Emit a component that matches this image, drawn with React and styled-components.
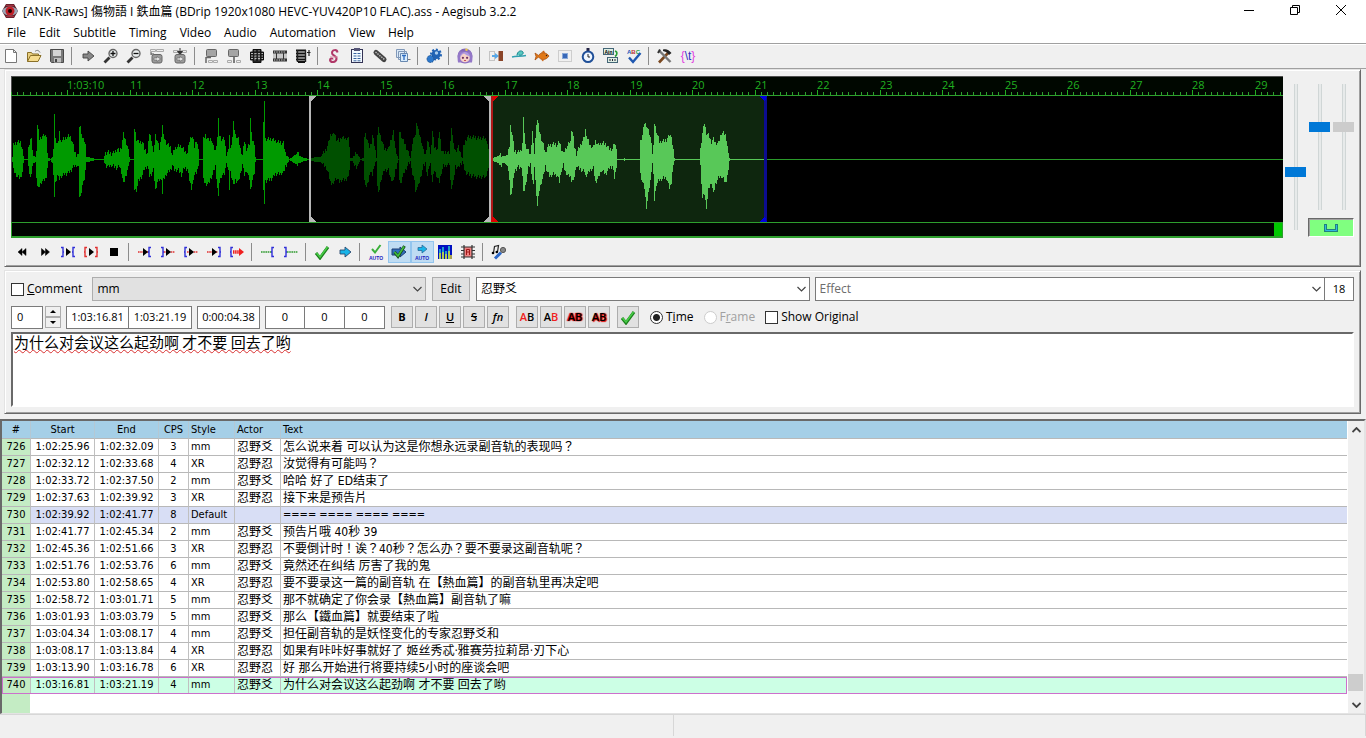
import React, { useState } from "react";
import styled, { createGlobalStyle, css } from "styled-components";

const GlobalStyle = createGlobalStyle`
  * {
    box-sizing: border-box;
  }
  body {
    margin: 0;
    background: #f0f0f0;
    color: #000;
    font-family: "Open Sans", "Noto Sans CJK SC", sans-serif;
    font-size: 12px;
    line-height: 16px;
  }
  button, input, select, textarea {
    margin: 0;
    padding: 0;
    font: inherit;
    color: inherit;
    border-radius: 0;
    outline: none;
  }
`;

/* ---------- window ---------- */

const Window = styled.div`
  display: flex;
  flex-direction: column;
  min-height: 100vh;
  overflow: hidden;
`;

const TitleBar = styled.header`
  display: flex;
  align-items: flex-start;
  height: 24px;
  padding: 0 2px;
  background: #fff;
`;

const TitleIcon = styled.svg`
  width: 16px;
  height: 16px;
  margin-top: 3px;
`;

const Title = styled.h1`
  flex: 1;
  margin: 0;
  padding: 4px 0 0 5px;
  font-family: "Open Sans", "Noto Sans CJK JP", sans-serif;
  font-size: 12px;
  font-weight: 400;
  line-height: 16px;
  white-space: nowrap;
`;

const WindowButton = styled.button`
  width: 46px;
  height: 22px;
  border: 0;
  background: none;
`;

const MenuBar = styled.nav`
  display: flex;
  height: 19px;
  padding-left: 7px;
  gap: 13px;
  background: #fff;
`;

const MenuLink = styled.a`
  color: #000;
  text-decoration: none;
  line-height: 18px;
`;

/* ---------- toolbars ---------- */

const ToolBar = styled.div`
  display: flex;
  align-items: center;
  height: 26px;
  border-top: 1px solid #a0a0a0;
  border-bottom: 1px solid #a0a0a0;
  box-shadow: inset 0 1px 0 #fff;
`;

const ToolButton = styled.button`
  display: flex;
  align-items: center;
  justify-content: center;
  width: 23px;
  height: 22px;
  padding-right: 1px;
  border: 1px solid transparent;
  background: none;
  ${(props) =>
    props.$on &&
    css`
      border-color: #93c5ee;
      background: #bfdcf3;
    `}
`;

const Separator = styled.span`
  width: 1px;
  height: 18px;
  margin: 0 5px 0 2px;
  background: #8c8c8c;
`;

/* ---------- panels ---------- */

const Panel = styled.section`
  margin: ${(props) => props.$margin};
  padding: ${(props) => props.$padding};
  border: 1px solid;
  border-color: #e3e3e3 #696969 #696969 #e3e3e3;
  box-shadow: inset 1px 1px 0 #fff, inset -1px -1px 0 #a0a0a0;
`;

const AudioRow = styled.div`
  display: flex;
  gap: 2px;
`;

const AudioDisplay = styled.div`
  display: flex;
  flex-direction: column;
  flex: 1;
  min-width: 0;
  height: 162px;
  background: #000;
`;

const Wave = styled.svg`
  display: block;
  width: 100%;
  height: 146px;
  font-family: "Open Sans", sans-serif;
  font-size: 11px;
`;

const AudioScroll = styled.div`
  display: flex;
  justify-content: flex-end;
  height: 16px;
  border: 1px solid #2da02d;
  border-bottom-width: 2px;
  background: #000500;
`;

const AudioThumb = styled.div`
  width: 8px;
  background: #00c800;
`;

const Sliders = styled.div`
  display: flex;
  gap: 2px;
  padding-top: 8px;
`;

const SliderColumn = styled.div`
  display: flex;
  flex-direction: column;
  gap: 8px;
`;

const SliderPair = styled.div`
  display: flex;
  gap: 3px;
  padding-left: 1px;
`;

const Slider = styled.input`
  appearance: none;
  writing-mode: vertical-lr;
  width: 21px;
  height: ${(props) => props.$length}px;
  background: none;

  &::-webkit-slider-runnable-track {
    width: 21px;
    background: linear-gradient(
      90deg,
      transparent 9px,
      #d0d6d6 9px 10px,
      #e7eaea 10px 12px,
      #d0d6d6 12px 13px,
      transparent 13px
    );
  }
  &::-webkit-slider-thumb {
    appearance: none;
    width: 21px;
    height: 10px;
    background: #0078d7;
  }
  &:disabled::-webkit-slider-thumb {
    background: #cccccc;
  }
`;

const LinkButton = styled.button`
  display: flex;
  align-items: center;
  justify-content: center;
  height: 19px;
  border: 1px solid;
  border-color: #696969 #fff #fff #696969;
  box-shadow: inset 1px 1px 0 #a0a0a0;
  background: #80ff80;
`;

const AudioTools = styled.div`
  display: flex;
  align-items: center;
  height: 28px;
`;

/* ---------- edit box ---------- */

const FormRow = styled.div`
  display: flex;
  align-items: center;
  height: 24px;
  margin-bottom: ${(props) => props.$gap}px;
`;

const CheckLabel = styled.label`
  display: flex;
  align-items: center;
  gap: 3px;
  margin-right: 10px;
  white-space: nowrap;
  color: ${(props) => (props.$dim ? "#a0a0a0" : "#000")};
`;

const CheckBox = styled.input`
  appearance: none;
  width: 13px;
  height: 13px;
  border: 1px solid #333;
  background: #fff;
  &:checked {
    background: #333;
  }
`;

const Radio = styled.input`
  appearance: none;
  width: 13px;
  height: 13px;
  border: 1px solid #333;
  border-radius: 50%;
  background: #fff;
  &:checked {
    background: radial-gradient(circle, #222 0 3px, #fff 4px);
  }
  &:disabled {
    border-color: #ccc;
  }
`;

const SelectBox = styled.div`
  display: grid;
  flex: ${(props) => props.$flex};
  min-width: 0;
  height: 24px;
  margin-right: ${(props) => props.$gap}px;
  align-items: center;

  > * {
    grid-area: 1 / 1;
  }
  > svg {
    justify-self: end;
    margin-right: 4px;
    pointer-events: none;
  }
`;

const Select = styled.select`
  appearance: none;
  width: 100%;
  height: 24px;
  padding: 0 20px 0 4px;
  border: 1px solid ${(props) => (props.$flat ? "#adadad" : "#7a7a7a")};
  background: ${(props) => (props.$flat ? "#e1e1e1" : "#fff")};
  color: ${(props) => (props.$dim ? "#6d6d6d" : "#000")};
`;

const PushButton = styled.button`
  width: 38px;
  height: 24px;
  margin-right: 6px;
  border: 1px solid #adadad;
  background: #e1e1e1;
`;

const Field = styled.input`
  width: ${(props) => props.$width}px;
  height: ${(props) => props.$height || 23}px;
  margin-right: ${(props) => props.$gap || 0}px;
  margin-left: ${(props) => (props.$joined ? "-1px" : 0)};
  padding: 0 ${(props) => (props.$align ? "5px" : 0)} 2px;
  border: 1px solid #7a7a7a;
  background: #fff;
  font-size: 11px;
  text-align: ${(props) => props.$align || "center"};
`;

const Spin = styled.div`
  display: flex;
  flex-direction: column;
  margin-right: 5px;
`;

const SpinButton = styled.button`
  display: flex;
  align-items: center;
  justify-content: center;
  width: 16px;
  height: 11px;
  border: 1px solid #adadad;
  background: #f0f0f0;
`;

const FormatButton = styled.button`
  display: flex;
  align-items: center;
  justify-content: center;
  width: 22px;
  height: 22px;
  margin-right: 2px;
  border: 1px solid #adadad;
  background: #e1e1e1;
  font-size: 11px;
  font-weight: ${(props) => (props.$light ? 600 : 700)};
  font-style: ${(props) => (props.$italic ? "italic" : "normal")};
  text-decoration: ${(props) => props.$line || "none"};
`;

const Ink = styled.span`
  color: ${(props) => props.$color || "#000"};
  text-shadow: ${(props) => props.$shadow || "none"};
`;

const Group = styled.div`
  display: flex;
  margin-right: ${(props) => props.$gap}px;
`;

const SubtitleText = styled.textarea`
  display: block;
  width: 100%;
  height: 75px;
  padding: 0 1px;
  border: 2px solid;
  border-color: #696969 #fff #fff #696969;
  background: #fff;
  font-family: "Noto Sans CJK SC", sans-serif;
  font-size: 15px;
  line-height: 15px;
  resize: none;
  text-decoration: underline wavy #d83030 1px;
  text-decoration-skip-ink: none;
`;

/* ---------- subtitle grid ---------- */

const GridFrame = styled.main`
  display: flex;
  flex: 1;
  margin-top: 5px;
  border: 2px solid;
  border-color: #696969 #e3e3e3 #e3e3e3 #696969;
  border-bottom-width: 1px;
  background: linear-gradient(90deg, #c4ecc4 28px, #fff 28px);
`;

const Table = styled.table`
  flex: 1;
  align-self: flex-start;
  border-spacing: 0;
  table-layout: fixed;
  width: 100%;
  font-family: "DejaVu Sans Condensed", "Noto Sans", "Noto Sans CJK TC", sans-serif;
  font-size: 11px;
  line-height: 16px;
`;

const Col = styled.col`
  width: ${(props) => (props.$width ? props.$width + "px" : "auto")};
`;

const Th = styled.th`
  height: 18px;
  padding: 0 0 0 ${(props) => (props.$left ? "2px" : 0)};
  border-right: 1px solid #b4c8d4;
  border-bottom: 1px solid #b8b8b8;
  background: #a5cfe7;
  font-weight: 400;
  text-align: ${(props) => (props.$left ? "left" : "center")};
  &:last-child {
    border-right: 0;
  }
`;

const Td = styled.td`
  height: 17px;
  padding: 0 0 0 ${(props) => (props.$left ? "2px" : 0)};
  border-right: 1px solid #c0c0c0;
  border-bottom: 1px solid #b8b8b8;
  background: ${(props) => props.$bg || "#fff"};
  font-size: ${(props) => (props.$cjk ? "12px" : "11px")};
  text-align: ${(props) => (props.$left ? "left" : "center")};
  white-space: nowrap;
  overflow: hidden;
  &:last-child {
    border-right: 0;
  }
`;

const Tr = styled.tr`
  ${(props) =>
    props.$active &&
    css`
      outline: 1px solid #cc70cc;
      outline-offset: -1px;
    `}
`;

const ScrollBar = styled.div`
  display: flex;
  flex-direction: column;
  width: 16px;
  margin-left: 1px;
  background: #f0f0f0;
`;

const ScrollArrow = styled.button`
  display: flex;
  align-items: center;
  justify-content: center;
  height: 17px;
  border: 0;
  background: none;
`;

const ScrollTrack = styled.div`
  display: flex;
  flex: 1;
  align-items: flex-end;
  padding-bottom: 5px;
`;

const ScrollThumb = styled.div`
  width: 15px;
  height: 17px;
  background: #cdcdcd;
`;

const StatusBar = styled.footer`
  display: flex;
  height: 24px;
  border-top: 1px solid #d7d7d7;
`;

const StatusCell = styled.div`
  flex: 1;
  margin-bottom: 2px;
  border-right: 1px solid #d7d7d7;
  &:last-child {
    flex: 1 1 20px;
  }
`;

/* ---------- icons ---------- */

const blackArrow = (x) => <path d={`M${x} 4l5 4-5 4z`} fill="#000" />;
const bracketL = (x, color) => (
  <path d={`M${x + 3} 3.5h-2v9h2M${x + 1} 8h-1`} fill="none" stroke={color} strokeWidth="1.4" />
);
const bracketR = (x, color) => (
  <path d={`M${x} 3.5h2v9h-2M${x + 2} 8h1`} fill="none" stroke={color} strokeWidth="1.4" />
);
const dots = (x1, x2, color) => (
  <path d={`M${x1} 8H${x2}`} stroke={color} strokeWidth="1.6" strokeDasharray="1.6 .6" />
);
const lens = (
  <>
    <path d="M1.500 14.500l5-5" stroke="#333" strokeWidth="2.800" />
    <circle cx="10" cy="5.500" r="4" fill="#e8ecec" stroke="#666" strokeWidth="1.400" />
  </>
);
const tick = (
  <>
    <path d="M2 9l4 5L14 3" fill="none" stroke="#1c801c" strokeWidth="3" />
    <path d="M2.500 9l3.500 4L13.500 3" fill="none" stroke="#48cc48" strokeWidth="1.600" />
  </>
);
const blueArrow = (
  <path d="M3 6h5V3l6 5-6 5v-3H3z" fill="#18b4e8" stroke="#2a4a70" strokeWidth=".9" />
);
const autoText = (
  <text x="8" y="15.500" fontSize="5" textAnchor="middle" fill="#2020c0" fontWeight="700" fontFamily="Liberation Sans, sans-serif">
    AUTO
  </text>
);
const grayBox = (
  <>
    <rect x="3" y="6.500" width="10" height="8.500" rx="2" fill="#9a9a9a" stroke="#666" />
    <path d="M5 10h3V8.500l3.500 2.500L8 13.500v-1.500H5z" fill="#e4e4e4" stroke="#555" strokeWidth=".5" />
  </>
);

const icons = {
  new: <path d="M2.500 1.500h8l3 3v10h-11zM10.500 1.500v3h3" fill="#fff" stroke="#777" />,
  open: (
    <>
      <path d="M1.500 13.500v-9h4l1 1.500h6v2" fill="#e9cf80" stroke="#8a7028" />
      <path d="M1.500 13.500l3-6h10.500l-3 6z" fill="#f6dc8e" stroke="#8a7028" />
      <path d="M9 3.500c2-2 4-1 5 1" fill="none" stroke="#777" />
    </>
  ),
  save: (
    <>
      <path d="M1.500 1.500h13v13h-12l-1-1z" fill="#7a7a7a" stroke="#4a4a4a" />
      <rect x="4" y="2" width="8" height="6" fill="#d4d4d4" />
      <rect x="5" y="10" width="7" height="4.500" fill="#c0c0c0" />
      <rect x="6" y="11" width="2" height="3" fill="#444" />
    </>
  ),
  jump: <path d="M3 6h5V3l6 5-6 5v-3H3z" fill="#888" stroke="#444" strokeWidth=".9" />,
  zoomIn: (
    <>
      {lens}
      <path d="M7.500 5.500h5M10 3v5" stroke="#111" strokeWidth="1.300" />
    </>
  ),
  zoomOut: (
    <>
      {lens}
      <path d="M7.500 5.500h5" stroke="#111" strokeWidth="1.300" />
    </>
  ),
  snapStart: (
    <>
      <path d="M1.500 1.500h5v2h-5zM7.500 1.500h7v2h-7z" fill="#eee" stroke="#aaa" />
      <path d="M2 4v3M2 6h3" stroke="#555" />
      {grayBox}
    </>
  ),
  snapEnd: (
    <>
      <path d="M1.500 2.500h5v2h-5zM9.500 2.500h5v2h-5z" fill="#eee" stroke="#aaa" />
      <path d="M5.500 3.500h5L8 6.500zM8 0v4" fill="#333" stroke="#333" />
      {grayBox}
    </>
  ),
  subStart: (
    <>
      <rect x="3.500" y="1.500" width="10" height="7" rx="1" fill="#a4a4a4" stroke="#666" />
      <path d="M3 9v6M3 9.500h5" stroke="#666" strokeWidth="1.500" />
      <path d="M5.500 12.500h4v2h-4zM10.500 12.500h4v2h-4z" fill="#eee" stroke="#aaa" />
    </>
  ),
  subEnd: (
    <>
      <rect x="2.500" y="1.500" width="10" height="7" rx="1" fill="#a4a4a4" stroke="#666" />
      <path d="M8 9v6" stroke="#555" strokeWidth="1.500" />
      <path d="M1.500 12.500h4v2h-4zM10.500 12.500h4v2h-4z" fill="#eee" stroke="#aaa" />
    </>
  ),
  filmGrid: (
    <>
      <path d="M4 1.500h8v13H4zM1.500 4h13v8h-13z" fill="#222" stroke="#111" />
      <path d="M2 5.500h12M2 8h12M2 10.500h12" stroke="#bbb" strokeDasharray="2 1.500" />
      <path d="M6 2v12M10 2v12" stroke="#999" strokeDasharray="1.500 1.500" />
    </>
  ),
  film: (
    <>
      <rect x="1" y="2.500" width="14" height="11" fill="#333" />
      <path d="M2 4h12M2 12h12" stroke="#ddd" strokeWidth="1.200" strokeDasharray="1.200 1.200" />
      <path d="M1 5.500h3v5H1zM5 5.500h6v5H5zM12 5.500h3v5h-3z" fill="#c8c8c8" />
    </>
  ),
  filmLines: (
    <>
      <path d="M1 2.500h10M1 5.500h10M1 8.500h10M1 11.500h10M3 14h7" stroke="#111" strokeWidth="1.800" />
      <path d="M2.500 2v12M10.500 2v12" stroke="#222" strokeWidth="1.400" />
      <path d="M12 4.500h3.500M14 2v6" stroke="#222" strokeWidth="1.200" />
    </>
  ),
  styles: (
    <>
      <path d="M11.500 4.500C11 1 6 1.500 6 5c0 3 5 2.500 4.500 6-.5 3.500-6 4-6.500 1 0-2 2.500-2 2.500-.5" fill="none" stroke="#b03868" strokeWidth="2" />
      <path d="M4 9h8" stroke="#d890a8" />
    </>
  ),
  properties: (
    <>
      <rect x="2.500" y="1.500" width="11" height="13" fill="#f4faff" stroke="#335" />
      <rect x="5" y="0" width="6" height="3" fill="#557" />
      <path d="M4.500 5.500h7M4.500 8h7M4.500 10.500h7M4.500 12.800h7" stroke="#3a64a0" strokeDasharray="3 1" />
    </>
  ),
  attach: (
    <>
      <path d="M4 4.500l8 7" stroke="#444" strokeWidth="5" strokeLinecap="round" />
      <path d="M3.500 4l9 7.500" stroke="#bbb" strokeWidth="1.400" strokeDasharray="1.500 1" />
    </>
  ),
  fonts: (
    <>
      <path d="M1.500 1.500h8v8h-8zM3.500 3.500h8v8h-8z" fill="#dbe9f7" stroke="#8098b8" />
      <path d="M5.500 5.500h7v8h-7z" fill="#d8ebfb" stroke="#6888b0" />
      <path d="M7 7.500h4M9 7.500v4.500" stroke="#2a6ac0" strokeWidth="1.300" />
      <path d="M13 11.500h2.500" stroke="#777" />
    </>
  ),
  automation: (
    <>
      <circle cx="10" cy="6.500" r="4.500" fill="#1f62b4" />
      <circle cx="10" cy="6.500" r="5" fill="none" stroke="#1f62b4" strokeWidth="2" strokeDasharray="2 1.800" />
      <circle cx="4.500" cy="11" r="3.500" fill="#2c78cc" stroke="#174a88" strokeDasharray="1.500 1" />
      <circle cx="10.500" cy="5" r="1.700" fill="#a8ccee" />
    </>
  ),
  assdraw: (
    <>
      <circle cx="8" cy="8" r="7.500" fill="#8468b8" />
      <path d="M1 14.500C0 9 1 4 3 3.500h10c2 .5 3 5.500 2 11z" fill="#9478c8" />
      <ellipse cx="8" cy="9.800" rx="4.800" ry="4.500" fill="#f6d2c8" />
      <path d="M3 8.500c2-1 3-3 3.500-4 1 2 4 3 6.500 4-1-6-9-6-10 0z" fill="#b09ae0" />
      <circle cx="5.900" cy="9.800" r="1.100" fill="#703060" />
      <circle cx="10.100" cy="9.800" r="1.100" fill="#703060" />
      <path d="M7 12.500h2" stroke="#c05060" />
      <circle cx="9.500" cy="1.800" r="1.300" fill="#e8c850" />
    </>
  ),
  shift: (
    <>
      <path d="M1.500 3.500h5v9h-5z" fill="none" stroke="#999" strokeDasharray="1 1" />
      <path d="M4 7h3V5l4 3-4 3V9H4z" fill="#58a8e8" />
      <rect x="10.500" y="3" width="4.500" height="10" fill="#8a4428" />
    </>
  ),
  snail: (
    <>
      <path d="M1 9c4-1 8-.5 14-1.500" stroke="#30a0b0" fill="none" strokeWidth="1.300" />
      <path d="M6 7.500c0-4 4-6 6-3.500 1 2-2 4-4 3" fill="#58c8c0" stroke="#188890" />
    </>
  ),
  fish: (
    <>
      <path d="M1 5l3.500 2.500C7 3.500 12 4 15 8c-3 4.500-8 4.500-10.500 1L1 12l1-3.500z" fill="#e07818" stroke="#a85010" strokeWidth=".8" />
      <path d="M7 4.500l3-2 1 2.500M7 11.500l2 2 1-2" fill="#c86010" />
      <circle cx="12.500" cy="7.500" r=".7" fill="#222" />
    </>
  ),
  resolution: (
    <>
      <path d="M1.500 2.500h13v11h-13z" fill="none" stroke="#aaa" strokeDasharray="1 1" />
      <rect x="5.500" y="5.500" width="5" height="5" fill="#3868b8" stroke="#88a8d8" />
    </>
  ),
  timing: (
    <>
      <rect x="6.500" y="0" width="3" height="3" fill="#224" />
      <circle cx="8" cy="8.800" r="5.300" fill="#eef6ff" stroke="#1f4f98" strokeWidth="2" />
      <path d="M8 6v3h2" fill="none" stroke="#222" />
    </>
  ),
  kanji: (
    <>
      <rect x=".5" y=".5" width="10" height="6" fill="#dfeee4" stroke="#467" />
      <rect x="4.500" y="9.500" width="10" height="5" fill="#dfeee4" stroke="#467" />
      <text x="5.500" y="5.500" fontSize="5" textAnchor="middle" fontFamily="Liberation Sans, sans-serif" fontWeight="700">
        Ain
      </text>
      <path d="M6 12h2M9.500 11v2M11 12h2" stroke="#223" />
      <path d="M12 3c3 1 2 4 0 5.500" fill="none" stroke="#28a038" strokeWidth="1.600" />
    </>
  ),
  spell: (
    <>
      <text x="1" y="6" fontSize="6" fill="#c03030" fontFamily="Liberation Sans, sans-serif" fontWeight="700">
        <tspan fill="#2858b8">A</tspan>B<tspan fill="#28a040">C</tspan>
      </text>
      <path d="M3 9.500l4 4.500 7.500-9" fill="none" stroke="#2058b0" strokeWidth="2.400" />
    </>
  ),
  options: (
    <>
      <path d="M2 14.500L11 5" stroke="#7a4820" strokeWidth="2.600" />
      <path d="M2.500 3l11 11" stroke="#777" strokeWidth="2.400" />
      <path d="M6 1.500c3-1 6 0 8.500 3.500l-2.500 2C10 4 8 3.500 6 3z" fill="#222" />
      <path d="M1 5l2-3.500" stroke="#333" strokeWidth="2" />
    </>
  ),
  tags: (
    <text x="8" y="12" fontSize="12" textAnchor="middle" fill="#e040e0" fontFamily="Liberation Sans, sans-serif">
      {"{"}
      <tspan fill="#3030c0">\t</tspan>
      {"}"}
    </text>
  ),

  prev: <path d="M8 4.500v7L4 8zM12 4.500v7L8 8z" fill="#000" stroke="#000" strokeWidth=".5" />,
  next: <path d="M4.500 4.500v7l4-3.500zM8.500 4.500v7l4-3.500z" fill="#000" stroke="#000" strokeWidth=".5" />,
  playSel: (
    <>
      {bracketR(1, "#3030d8")}
      {blackArrow(6)}
      {bracketL(12, "#3030d8")}
    </>
  ),
  playLine: (
    <>
      {bracketL(1, "#e03030")}
      {blackArrow(6)}
      {bracketR(12, "#e03030")}
    </>
  ),
  stop: <rect x="4" y="4" width="8" height="8" fill="#000" />,
  before: (
    <>
      {dots(1, 12, "#e03030")}
      {blackArrow(6)}
      {bracketL(11, "#3030d8")}
    </>
  ),
  after: (
    <>
      {bracketR(1, "#3030d8")}
      {dots(4, 15, "#e03030")}
      {blackArrow(6)}
    </>
  ),
  begin: (
    <>
      {bracketL(1, "#3030d8")}
      {dots(4, 15, "#e03030")}
      {blackArrow(6)}
    </>
  ),
  end: (
    <>
      {dots(1, 12, "#e03030")}
      {blackArrow(6)}
      {bracketR(12, "#3030d8")}
    </>
  ),
  toEnd: (
    <>
      {bracketL(1, "#3030d8")}
      <path d="M4 8h7" stroke="#f02020" strokeWidth="3.500" strokeDasharray="1.500 .6" />
      <path d="M10 4l5 4-5 4z" fill="#f02020" />
    </>
  ),
  leadIn: (
    <>
      {dots(1, 12, "#2f9a2f")}
      {bracketL(11, "#3030d8")}
    </>
  ),
  leadOut: (
    <>
      {bracketR(1, "#3030d8")}
      {dots(4, 15, "#2f9a2f")}
    </>
  ),
  commit: tick,
  go: blueArrow,
  autoCommit: (
    <>
      <path d="M4 5l3 3.500L12.500 1" fill="none" stroke="#3ab03a" strokeWidth="2" />
      {autoText}
    </>
  ),
  commitNext: (
    <>
      <path d="M1 5h8V3l6 5-6 5v-2H1z" fill="#3070c0" stroke="#1c3c70" />
      <path d="M3.500 8l3.500 4.500L13.500 2" fill="none" stroke="#1c4c1c" strokeWidth="3" />
      <path d="M3.500 8l3.500 4L13 2.500" fill="none" stroke="#40c040" strokeWidth="1.600" />
    </>
  ),
  autoNext: (
    <>
      <path d="M4 3.500h4V1l5 4-5 4V6.500H4z" fill="#18b4e8" stroke="#2a6a98" strokeWidth=".8" />
      {autoText}
    </>
  ),
  spectrum: (
    <>
      <rect x="1" y="1" width="14" height="14" fill="#0010c0" />
      <path d="M3 15V5M6 15V3M9 15V7M12 15V2" stroke="#20a0c8" strokeWidth="2" />
      <path d="M3 15V9M6 15V8M9 15v-5M12 15V7M14 15v-4" stroke="#f0e020" strokeWidth="1.400" />
    </>
  ),
  karaokeGrid: (
    <>
      <rect x="4" y="3" width="8" height="10" fill="#ee8080" />
      <path d="M4 1v14M12 1v14M1 3h14M1 13h14M1 6.500h3M1 10h3M12 6.500h3M12 10h3" stroke="#333" strokeWidth="1.200" />
      <path d="M6.500 11V5.500h3v5.500M6.500 8h3" fill="none" stroke="#a01818" />
    </>
  ),
  karaoke: (
    <>
      <path d="M2.500 9l1-6.500 4-1L6.500 8" fill="none" stroke="#222" strokeWidth="1.200" />
      <circle cx="2" cy="9" r="1.300" />
      <circle cx="5.800" cy="8" r="1.300" />
      <path d="M4 14.500l6-6" stroke="#2c68c8" strokeWidth="3" />
      <circle cx="12" cy="6" r="2.600" fill="#888" stroke="#555" />
    </>
  ),
};

const Icon = ({ name }) => (
  <svg width="16" height="16" viewBox="0 0 16 16" aria-hidden="true">
    {icons[name]}
  </svg>
);

const Chevron = ({ up, bold }) => (
  <svg width="9" height="6" viewBox="0 0 9 6" aria-hidden="true">
    <path
      d={up ? "M.5 5l4-4 4 4" : "M.5 1l4 4 4-4"}
      fill="none"
      stroke="#444"
      strokeWidth={bold ? 1.8 : 1.2}
    />
  </svg>
);

/* ---------- data ---------- */

const menus = ["File", "Edit", "Subtitle", "Timing", "Video", "Audio", "Automation", "View", "Help"];

const mainTools = [
  ["new", "open", "save"],
  ["jump", "zoomIn", "zoomOut", "snapStart", "snapEnd"],
  ["subStart", "subEnd", "filmGrid", "film", "filmLines"],
  ["styles", "properties", "attach", "fonts"],
  ["automation"],
  ["assdraw"],
  ["shift", "snail", "fish", "resolution", "timing", "kanji", "spell"],
  ["options", "tags"],
];

const audioTools = [
  ["prev", "next", "playSel", "playLine", "stop"],
  ["before", "after", "begin", "end", "toEnd"],
  ["leadIn", "leadOut"],
  ["commit", "go"],
  ["autoCommit", "commitNext", "autoNext", "spectrum", "karaokeGrid"],
  ["karaoke"],
];

const pressed = ["commitNext", "autoNext"];

const lines = [
  [726, "1:02:25.96", "1:02:32.09", 3, "mm", "忍野爻", "怎么说来着 可以认为这是你想永远录副音轨的表现吗？"],
  [727, "1:02:32.12", "1:02:33.68", 4, "XR", "忍野忍", "汝觉得有可能吗？"],
  [728, "1:02:33.72", "1:02:37.50", 2, "mm", "忍野爻", "哈哈 好了 ED结束了"],
  [729, "1:02:37.63", "1:02:39.92", 3, "XR", "忍野忍", "接下来是预告片"],
  [730, "1:02:39.92", "1:02:41.77", 8, "Default", "", "==== ==== ==== ===="],
  [731, "1:02:41.77", "1:02:45.34", 2, "mm", "忍野爻", "预告片哦 40秒 39"],
  [732, "1:02:45.36", "1:02:51.66", 3, "XR", "忍野忍", "不要倒计时！诶？40秒？怎么办？要不要录这副音轨呢？"],
  [733, "1:02:51.76", "1:02:53.76", 6, "mm", "忍野爻", "竟然还在纠结 厉害了我的鬼"],
  [734, "1:02:53.80", "1:02:58.65", 4, "XR", "忍野忍", "要不要录这一篇的副音轨 在【熱血篇】的副音轨里再决定吧"],
  [735, "1:02:58.72", "1:03:01.71", 5, "mm", "忍野爻", "那不就确定了你会录【熱血篇】副音轨了嘛"],
  [736, "1:03:01.93", "1:03:03.79", 5, "mm", "忍野爻", "那么【鐵血篇】就要结束了啦"],
  [737, "1:03:04.34", "1:03:08.17", 4, "mm", "忍野爻", "担任副音轨的是妖怪变化的专家忍野爻和"],
  [738, "1:03:08.17", "1:03:13.84", 4, "XR", "忍野忍", "如果有咔咔好事就好了 姬丝秀忒·雅赛劳拉莉昂·刃下心"],
  [739, "1:03:13.90", "1:03:16.78", 6, "XR", "忍野忍", "好 那么开始进行将要持续5小时的座谈会吧"],
  [740, "1:03:16.81", "1:03:21.19", 4, "mm", "忍野爻", "为什么对会议这么起劲啊 才不要 回去了哟"],
];

// peaks: x, height above the centre line, height below it
const peaksBefore = [
  [1, 2, 2], [2, 14, 10], [6, 17, 17], [9, 17, 18], [11, 10, 12], [12, 3, 3], [13, 0, 0], [16, 0, 0],
  [17, 10, 8], [19, 20, 17], [20, 21, 14], [21, 9, 6], [22, 3, 3], [24, 2, 2], [25, 8, 18], [26, 34, 26],
  [27, 30, 27], [28, 20, 26], [30, 22, 22], [33, 24, 20], [35, 22, 18], [36, 6, 8], [37, 1, 1], [39, 0, 0],
  [41, 2, 3], [42, 10, 15], [43, 45, 37], [44, 20, 23], [46, 16, 15], [47, 18, 16], [48, 28, 20], [49, 18, 17],
  [53, 20, 14], [57, 23, 13], [59, 22, 11], [61, 17, 8], [63, 8, 6], [65, 4, 5], [67, 5, 6], [68, 32, 37],
  [69, 32, 37], [71, 21, 25], [73, 17, 20], [74, 15, 10], [75, 2, 2], [81, 1, 1], [84, 0, 0], [92, 0, 0],
  [94, 6, 5], [97, 7, 7], [100, 5, 5], [103, 7, 7], [106, 10, 8], [108, 8, 6], [110, 12, 12], [112, 25, 24],
  [115, 16, 14], [117, 10, 6], [118, 2, 2], [119, 0, 0], [122, 0, 0], [123, 31, 29], [125, 20, 30], [127, 17, 21],
  [131, 17, 15], [133, 10, 9], [136, 6, 6], [138, 26, 16], [140, 20, 14], [142, 5, 10], [144, 24, 30], [146, 18, 22],
  [148, 10, 20], [150, 22, 20], [151, 34, 34], [152, 23, 20], [155, 16, 14], [159, 12, 10], [161, 4, 5], [163, 10, 10],
  [167, 13, 10], [170, 13, 15], [173, 8, 8], [176, 6, 9], [178, 18, 20], [180, 23, 28], [182, 20, 20], [183, 12, 14],
  [185, 19, 12], [187, 10, 6], [188, 0, 0], [191, 0, 0], [192, 20, 20], [194, 24, 24], [197, 19, 24], [200, 20, 17],
  [202, 12, 12], [204, 8, 6], [206, 22, 28], [207, 41, 36], [208, 24, 22], [210, 20, 16], [213, 20, 14], [215, 3, 3],
  [217, 10, 10], [218, 24, 30], [219, 10, 12], [221, 22, 20], [222, 36, 26], [224, 24, 20], [227, 20, 22], [229, 10, 14],
  [231, 4, 4], [233, 18, 15], [235, 10, 10], [238, 14, 20], [239, 40, 30], [241, 18, 20], [243, 14, 14], [244, 2, 2],
  [245, 0, 0], [251, 0, 0], [252, 37, 30], [253, 58, 44], [254, 20, 21], [257, 20, 20], [261, 20, 18], [264, 18, 14],
  [267, 17, 14], [272, 16, 13], [274, 6, 6], [276, 3, 3], [278, 0, 0], [281, 2, 2], [285, 5, 4], [286, 7, 6],
  [288, 3, 3], [292, 1, 1], [298, 0, 0],
];

const peaksPrevious = [
  [300, 1, 1], [305, 2, 2], [309, 2, 2], [312, 6, 5], [315, 10, 8], [317, 16, 14], [319, 24, 22], [322, 26, 24],
  [323, 26, 20], [325, 20, 18], [328, 18, 22], [330, 22, 20], [334, 20, 20], [337, 22, 16], [338, 12, 10], [339, 1, 1],
  [341, 1, 1], [343, 4, 5], [345, 7, 7], [347, 3, 4], [349, 0, 0], [352, 1, 1], [353, 22, 20], [354, 25, 26],
  [357, 16, 22], [358, 12, 14], [360, 15, 12], [361, 24, 16], [363, 14, 5], [365, 1, 1], [366, 24, 26], [367, 30, 34],
  [370, 20, 18], [373, 10, 10], [377, 10, 10], [379, 18, 18], [382, 27, 22], [384, 10, 10], [386, 3, 3], [387, 0, 0],
  [388, 27, 20], [389, 26, 24], [391, 20, 17], [394, 14, 10], [397, 6, 4], [399, 1, 1], [401, 15, 15], [403, 22, 20],
  [404, 24, 32], [405, 38, 28], [407, 28, 26], [410, 18, 14], [412, 8, 6], [414, 4, 3], [416, 18, 16], [418, 12, 6],
  [419, 4, 4], [421, 28, 22], [423, 12, 10], [426, 10, 18], [428, 28, 22], [430, 10, 12], [432, 6, 6], [436, 7, 5],
  [438, 5, 5], [439, 18, 20], [440, 33, 27], [442, 14, 22], [444, 8, 6], [447, 12, 8], [449, 6, 4], [451, 1, 1],
  [452, 12, 6], [454, 18, 12], [456, 22, 14], [461, 22, 16], [467, 21, 17], [474, 21, 17], [475, 20, 14], [477, 10, 8],
  [478, 1, 1],
];

const peaksActive = [
  [482, 1, 1], [484, 2, 2], [487, 3, 3], [489, 5, 6], [491, 3, 3], [493, 3, 3], [496, 4, 6], [498, 12, 20],
  [499, 33, 36], [501, 24, 28], [503, 8, 12], [506, 7, 7], [510, 8, 8], [511, 16, 16], [512, 40, 33], [514, 14, 26],
  [517, 8, 8], [519, 4, 4], [521, 28, 20], [522, 16, 24], [523, 6, 6], [525, 34, 36], [526, 39, 46], [528, 28, 30],
  [530, 20, 22], [532, 14, 16], [534, 6, 6], [536, 12, 12], [538, 14, 16], [543, 15, 14], [546, 14, 16], [548, 17, 22],
  [550, 10, 10], [552, 5, 5], [554, 10, 12], [557, 15, 16], [559, 18, 16], [560, 30, 20], [562, 23, 20], [563, 12, 16],
  [565, 5, 5], [567, 10, 8], [570, 16, 10], [573, 22, 12], [574, 29, 16], [576, 20, 14], [579, 13, 10], [582, 12, 8],
  [584, 18, 22], [587, 14, 18], [590, 16, 10], [594, 15, 14], [598, 10, 8], [601, 10, 6], [603, 16, 18], [605, 10, 8],
  [606, 0, 0], [612, 0, 0], [613, 1, 1], [614, 0, 0], [628, 0, 0], [629, 18, 14], [631, 24, 22], [633, 36, 28],
  [635, 34, 47], [637, 28, 34], [639, 22, 20], [640, 16, 12], [641, 5, 3], [642, 14, 14], [643, 36, 40], [645, 28, 24],
  [648, 17, 20], [652, 18, 18], [655, 19, 18], [658, 24, 28], [660, 22, 24], [661, 14, 12], [663, 1, 1], [664, 0, 0],
  [687, 0, 0], [688, 0, 0], [689, 10, 6], [691, 26, 38], [693, 36, 34], [695, 26, 47], [697, 24, 30], [700, 17, 22],
  [702, 20, 34], [704, 16, 24], [707, 16, 18], [710, 26, 16], [714, 25, 22], [715, 20, 20], [717, 6, 10], [718, 1, 1],
  [719, 0, 0], [753, 0, 0],
];

// one bar per pixel column, with a little roughness on the loud parts
function wavePath(peaks) {
  let d = "";
  for (let i = 0; i < peaks.length - 1; i++) {
    const [x1, up1, down1] = peaks[i];
    const [x2, up2, down2] = peaks[i + 1];
    for (let x = x1; x < x2; x++) {
      const t = (x - x1) / (x2 - x1);
      const rough = x2 - x1 > 1 && up1 > 3 ? ((x * 7) % 5) - 2 : 0;
      const up = Math.max(0, Math.round(up1 + (up2 - up1) * t + rough));
      const down = Math.max(0, Math.round(down1 + (down2 - down1) * t - rough));
      d += `M${x} ${83 - up}h1V${84 + down}h-1z`;
    }
  }
  return d;
}

const SECOND = 62.5;
const seconds = Array.from({ length: 20 }, (_, i) => i + 10);
const minorTicks = Array.from({ length: 400 }, (_, i) => Math.round(56 + (i - 9) * (SECOND / 10)));

/* ---------- parts ---------- */

const Tools = ({ groups }) =>
  groups.map((group, i) => (
    <React.Fragment key={group[0]}>
      {i > 0 && <Separator />}
      {group.map((name) => (
        <ToolButton key={name} type="button" aria-label={name} $on={pressed.includes(name)}>
          <Icon name={name} />
        </ToolButton>
      ))}
    </React.Fragment>
  ));

const Waveform = () => (
  <Wave role="img" aria-label="Audio waveform" shapeRendering="crispEdges">
    <rect width="100%" height="20" fill="#000700" />
    <rect width="100%" height="1" fill="#505050" />
    <rect width="1" height="100%" fill="#505050" />
    <rect y="19" width="100%" height="1" fill="#2da02d" />
    {minorTicks.map((x) => (
      <rect key={x} x={x} y="16" width="1" height="3" fill="#2da02d" />
    ))}
    {seconds.map((s) => {
      const x = Math.round(56 + (s - 10) * SECOND);
      return (
        <g key={s} fill="#20b020">
          <rect x={x} y="14" width="1" height="5" />
          <text x={x} y="13">
            {s === 10 ? "1:03:10" : s}
          </text>
        </g>
      );
    })}
    <rect x="482" y="20" width="271" height="126" fill="#0e260e" />
    <rect x="756" y="83" width="100%" height="1" fill="#2a9a2a" />
    <path d={wavePath(peaksBefore)} fill="#009a00" />
    <path d={wavePath(peaksPrevious)} fill="#005000" />
    <path d={wavePath(peaksActive)} fill="#58c858" />
    <path d="M298 20h7l-5 6v114l5 6h-7z" fill="#b8b8b8" />
    <path d="M480 20h-7l5 6v114l-5 6h7z" fill="#b8b8b8" />
    <rect x="480" y="20" width="2" height="126" fill="#b01818" />
    <path d="M480 20h7l-5 6v-6zM480 146h7l-5-6z" fill="#e00000" />
    <rect x="753" y="20" width="3" height="126" fill="#0c0c90" />
    <path d="M756 20h-7l5 6zM756 146h-7l5-6z" fill="#0000e0" />
  </Wave>
);

const Combo = ({ label, value, flex, gap, flat, dim }) => (
  <SelectBox $flex={flex} $gap={gap}>
    <Select aria-label={label} defaultValue={value} $flat={flat} $dim={dim}>
      <option>{value}</option>
    </Select>
    <Chevron />
  </SelectBox>
);

const EditBox = () => {
  const [text, setText] = useState("为什么对会议这么起劲啊 才不要 回去了哟");
  return (
    <Panel $margin="3px 5px 0 4px" $padding="6px">
      <FormRow $gap={4}>
        <CheckLabel>
          <CheckBox type="checkbox" />
          <span>
            <u>C</u>omment
          </span>
        </CheckLabel>
        <Combo label="Style" value="mm" flex="2 1 0" gap={6} flat />
        <PushButton type="button">Edit</PushButton>
        <Combo label="Actor" value="忍野爻" flex="2 1 0" gap={5} />
        <Combo label="Effect" value="Effect" flex="3 1 10px" gap={0} dim />
        <Field aria-label="Longest line" defaultValue="18" $width={30} $height={24} $joined />
      </FormRow>
      <FormRow $gap={3}>
        <Field aria-label="Layer" defaultValue="0" $width={32} $gap={2} $align="left" />
        <Spin>
          <SpinButton type="button" aria-label="Layer up">
            <svg width="6" height="3">
              <path d="M0 3l3-3 3 3z" />
            </svg>
          </SpinButton>
          <SpinButton type="button" aria-label="Layer down">
            <svg width="6" height="3">
              <path d="M0 0l3 3 3-3z" />
            </svg>
          </SpinButton>
        </Spin>
        <Field aria-label="Start time" defaultValue="1:03:16.81" $width={63} />
        <Field aria-label="End time" defaultValue="1:03:21.19" $width={64} $gap={5} $joined />
        <Field aria-label="Duration" defaultValue="0:00:04.38" $width={63} $gap={5} />
        <Field aria-label="Left margin" defaultValue="0" $width={40} />
        <Field aria-label="Right margin" defaultValue="0" $width={41} $joined />
        <Field aria-label="Vertical margin" defaultValue="0" $width={41} $gap={6} $joined />
        <Group $gap={5}>
          <FormatButton type="button">B</FormatButton>
          <FormatButton type="button" $light $italic>I</FormatButton>
          <FormatButton type="button" $light $line="underline">U</FormatButton>
          <FormatButton type="button" $light $line="line-through">S</FormatButton>
          <FormatButton type="button" $light $italic>fn</FormatButton>
        </Group>
        <Group $gap={5}>
          <FormatButton type="button" $light>
            <Ink $color="#f02020">A</Ink>
            <Ink>B</Ink>
          </FormatButton>
          <FormatButton type="button" $light>
            <Ink>A</Ink>
            <Ink $color="#f02020">B</Ink>
          </FormatButton>
          <FormatButton type="button" $light>
            <Ink $shadow="0 0 1px #e00000, 1px 0 1px #e00000, -1px 0 1px #e00000">AB</Ink>
          </FormatButton>
          <FormatButton type="button" $light>
            <Ink $shadow="1px 1px 1px #e00000, 1px 0 1px #e00000">AB</Ink>
          </FormatButton>
        </Group>
        <Group $gap={9}>
          <FormatButton type="button" aria-label="Commit">
            <Icon name="commit" />
          </FormatButton>
        </Group>
        <CheckLabel>
          <Radio type="radio" name="unit" defaultChecked />
          <span>
            T<u>i</u>me
          </span>
        </CheckLabel>
        <CheckLabel $dim>
          <Radio type="radio" name="unit" disabled />
          <span>
            F<u>r</u>ame
          </span>
        </CheckLabel>
        <CheckLabel>
          <CheckBox type="checkbox" />
          Show Original
        </CheckLabel>
      </FormRow>
      <SubtitleText
        aria-label="Subtitle text"
        spellCheck={false}
        value={text}
        onChange={(e) => setText(e.target.value)}
      />
    </Panel>
  );
};

const SubtitleRow = ({ line, active, comment }) => {
  const [number, start, end, cps, style, actor, text] = line;
  const bg = active ? "#ccffe5" : comment ? "#d8def5" : "#fff";
  return (
    <Tr $active={active}>
      <Td $bg="#c4ecc4">{number}</Td>
      <Td $bg={bg}>{start}</Td>
      <Td $bg={bg}>{end}</Td>
      <Td $bg={bg}>{cps}</Td>
      <Td $bg={bg} $left>{style}</Td>
      <Td $bg={bg} $left $cjk>{actor}</Td>
      <Td $bg={bg} $left $cjk={!comment}>{text}</Td>
    </Tr>
  );
};

export default function App() {
  return (
    <Window>
      <GlobalStyle />
      <TitleBar>
        <TitleIcon viewBox="0 0 16 16" aria-hidden="true">
          <path d="M4 1h8l4 7-4 7H4L0 8z" fill="#5a1c24" />
          <path d="M0 8c3-6 13-6 16 0-3 6-13 6-16 0z" fill="#9aa8b8" />
          <circle cx="8" cy="8" r="4.500" fill="#c02028" />
          <circle cx="8" cy="8" r="2" fill="#200" />
          <path d="M4 2.500h8M4 13.500h8" stroke="#a03040" strokeWidth="1.500" />
        </TitleIcon>
        <Title>[ANK-Raws] 傷物語 I 鉄血篇 (BDrip 1920x1080 HEVC-YUV420P10 FLAC).ass - Aegisub 3.2.2</Title>
        <WindowButton type="button" aria-label="Minimize">
          <svg width="10" height="10">
            <path d="M0 5.500h10" stroke="#000" />
          </svg>
        </WindowButton>
        <WindowButton type="button" aria-label="Restore">
          <svg width="10" height="10">
            <path d="M.5 2.500h7v7h-7zM2.500 2.500v-2h7v7h-2" fill="none" stroke="#000" />
          </svg>
        </WindowButton>
        <WindowButton type="button" aria-label="Close">
          <svg width="10" height="10">
            <path d="M0 0l10 10M10 0L0 10" stroke="#000" />
          </svg>
        </WindowButton>
      </TitleBar>
      <MenuBar>
        {menus.map((menu) => (
          <MenuLink key={menu} href="#">
            {menu}
          </MenuLink>
        ))}
      </MenuBar>
      <ToolBar>
        <Tools groups={mainTools} />
      </ToolBar>

      <Panel $margin="0 5px 0 4px" $padding="6px 6px 0">
        <AudioRow>
          <AudioDisplay>
            <Waveform />
            <AudioScroll>
              <AudioThumb />
            </AudioScroll>
          </AudioDisplay>
          <Sliders>
            <Slider type="range" aria-label="Horizontal zoom" defaultValue="61" $length={146} />
            <SliderColumn>
              <SliderPair>
                <Slider type="range" aria-label="Vertical zoom" defaultValue="33" $length={126} />
                <Slider type="range" aria-label="Volume" defaultValue="33" disabled $length={126} />
              </SliderPair>
              <LinkButton type="button" aria-label="Link zoom and volume">
                <svg width="14" height="8">
                  <path d="M1.500 0v6.500h11V0" fill="none" stroke="#208080" strokeWidth="3" />
                  <path d="M1.500 1v5.500h11V1" fill="none" stroke="#30b8e0" />
                </svg>
              </LinkButton>
            </SliderColumn>
          </Sliders>
        </AudioRow>
        <AudioTools>
          <Tools groups={audioTools} />
        </AudioTools>
      </Panel>

      <EditBox />

      <GridFrame>
        <Table>
          <colgroup>
            <Col $width={29} />
            <Col $width={64} />
            <Col $width={64} />
            <Col $width={30} />
            <Col $width={46} />
            <Col $width={46} />
            <Col />
          </colgroup>
          <thead>
            <tr>
              <Th>#</Th>
              <Th>Start</Th>
              <Th>End</Th>
              <Th>CPS</Th>
              <Th $left>Style</Th>
              <Th $left>Actor</Th>
              <Th $left>Text</Th>
            </tr>
          </thead>
          <tbody>
            {lines.map((line) => (
              <SubtitleRow key={line[0]} line={line} active={line[0] === 740} comment={line[0] === 730} />
            ))}
          </tbody>
        </Table>
        <ScrollBar>
          <ScrollArrow type="button" aria-label="Scroll up">
            <Chevron up bold />
          </ScrollArrow>
          <ScrollTrack>
            <ScrollThumb />
          </ScrollTrack>
          <ScrollArrow type="button" aria-label="Scroll down">
            <Chevron bold />
          </ScrollArrow>
        </ScrollBar>
      </GridFrame>
      <StatusBar>
        <StatusCell />
        <StatusCell />
      </StatusBar>
    </Window>
  );
}
